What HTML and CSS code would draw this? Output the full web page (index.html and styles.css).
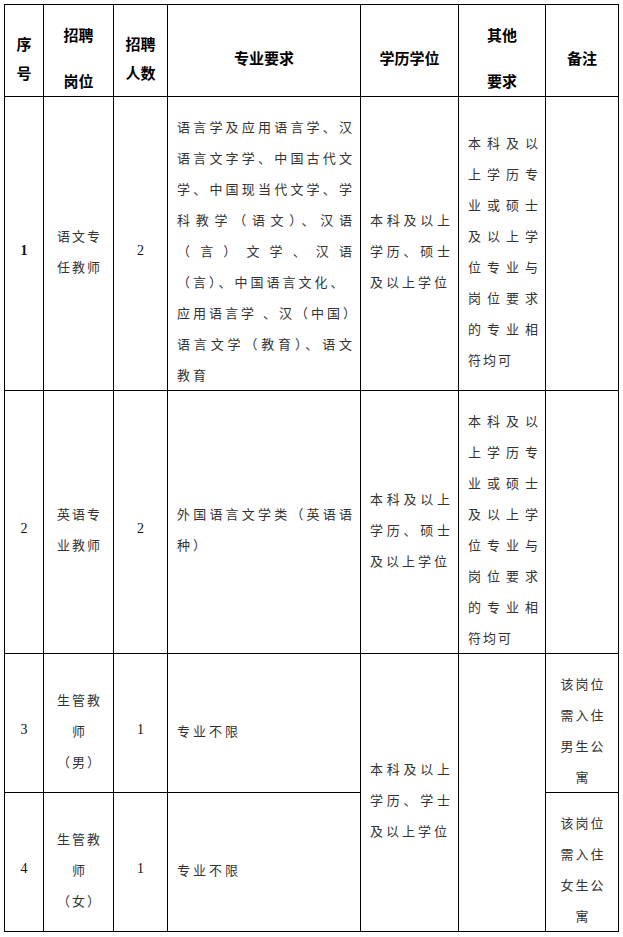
FILE: index.html
```html
<!DOCTYPE html>
<html lang="zh-CN">
<head>
<meta charset="utf-8">
<title>招聘岗位表</title>
<link rel="stylesheet" href="styles.css">
</head>
<body>
<table class="grid">
  <colgroup>
    <col class="c-no"><col class="c-post"><col class="c-num"><col class="c-major"><col class="c-degree"><col class="c-other"><col class="c-note">
  </colgroup>
  <thead>
    <tr class="r-head">
      <th class="h-tight"><div>序</div><div>号</div></th>
      <th class="h-wide"><div>招聘</div><div>岗位</div></th>
      <th class="h-tight"><div>招聘</div><div>人数</div></th>
      <th>专业要求</th>
      <th>学历学位</th>
      <th class="h-wide"><div>其他</div><div>要求</div></th>
      <th>备注</th>
    </tr>
  </thead>
  <tbody>
    <tr class="r-1">
      <td class="num strong">1</td>
      <td class="center"><div>语文专</div><div>任教师</div></td>
      <td class="num">2</td>
      <td class="text">
        <div class="full">语言学及应用语言学、汉</div>
        <div class="full">语言文字学、中国古代文</div>
        <div class="full">学、中国现当代文学、学</div>
        <div class="full">科教学（语文）、汉语</div>
        <div class="full">（言）文学、汉语</div>
        <div>（言）、中国语言文化、</div>
        <div>应用语言学 、汉（中国）</div>
        <div class="full">语言文学（教育）、语文</div>
        <div>教育</div>
      </td>
      <td class="text">
        <div class="full">本科及以上</div>
        <div class="full">学历、硕士</div>
        <div>及以上学位</div>
      </td>
      <td class="text other">
        <div class="full">本科及以</div>
        <div class="full">上学历专</div>
        <div class="full">业或硕士</div>
        <div class="full">及以上学</div>
        <div class="full">位专业与</div>
        <div class="full">岗位要求</div>
        <div class="full">的专业相</div>
        <div>符均可</div>
      </td>
      <td></td>
    </tr>
    <tr class="r-2">
      <td class="num">2</td>
      <td class="center"><div>英语专</div><div>业教师</div></td>
      <td class="num">2</td>
      <td class="text">
        <div class="full">外国语言文学类（英语语</div>
        <div>种）</div>
      </td>
      <td class="text">
        <div class="full">本科及以上</div>
        <div class="full">学历、硕士</div>
        <div>及以上学位</div>
      </td>
      <td class="text other">
        <div class="full">本科及以</div>
        <div class="full">上学历专</div>
        <div class="full">业或硕士</div>
        <div class="full">及以上学</div>
        <div class="full">位专业与</div>
        <div class="full">岗位要求</div>
        <div class="full">的专业相</div>
        <div>符均可</div>
      </td>
      <td></td>
    </tr>
    <tr class="r-3">
      <td class="num">3</td>
      <td class="center"><div>生管教</div><div>师</div><div>（男）</div></td>
      <td class="num">1</td>
      <td class="text"><div>专业不限</div></td>
      <td class="text" rowspan="2">
        <div class="full">本科及以上</div>
        <div class="full">学历、学士</div>
        <div>及以上学位</div>
      </td>
      <td rowspan="2"></td>
      <td class="center"><div>该岗位</div><div>需入住</div><div>男生公</div><div>寓</div></td>
    </tr>
    <tr class="r-4">
      <td class="num">4</td>
      <td class="center"><div>生管教</div><div>师</div><div>（女）</div></td>
      <td class="num">1</td>
      <td class="text"><div>专业不限</div></td>
      <td class="center"><div>该岗位</div><div>需入住</div><div>女生公</div><div>寓</div></td>
    </tr>
  </tbody>
</table>
</body>
</html>
```

FILE: styles.css
```css
html, body {
  background: #ffffff;
}

body {
  margin: 0;
  padding: 4px 0 0 4px;
  font-family: "Noto Sans CJK SC", "Noto Sans", sans-serif;
  color: #333333;
}

.grid {
  border-collapse: collapse;
  table-layout: fixed;
  width: 615px;
}

.c-no { width: 39px; }
.c-post { width: 70px; }
.c-num { width: 54px; }
.c-major { width: 193px; }
.c-degree { width: 98px; }
.c-other { width: 87px; }
.c-note { width: 73px; }

.grid th,
.grid td {
  border: 1px solid #000000;
  padding: 14px 0 0 0;
  vertical-align: middle;
}

.r-head { height: 92px; }
.r-1 { height: 294px; }
.r-2 { height: 263px; }
.r-3 { height: 139px; }
.r-4 { height: 139px; }

.grid th {
  font-size: 15px;
  font-weight: 700;
  color: #000000;
  text-align: center;
  line-height: 30px;
}

.grid th.h-tight { line-height: 29px; }
.grid th.h-wide div + div { margin-top: 16px; }

.num {
  font-family: "Liberation Serif", "Noto Serif", serif;
  font-size: 14px;
  color: #111111;
  text-align: center;
}

.num.strong { font-weight: 700; }

.center {
  font-size: 13px;
  line-height: 31px;
  letter-spacing: 2px;
  text-align: center;
}

.center div {
  padding-left: 2px;
}

.grid td.text {
  font-size: 13px;
  line-height: 31px;
  letter-spacing: 3px;
  text-align: left;
  padding-left: 9px;
  padding-right: 5px;
}

.grid td.text.other {
  padding-left: 9px;
  padding-right: 5px;
  letter-spacing: 2px;
}

.text .full {
  text-align: justify;
  text-align-last: justify;
}
```
